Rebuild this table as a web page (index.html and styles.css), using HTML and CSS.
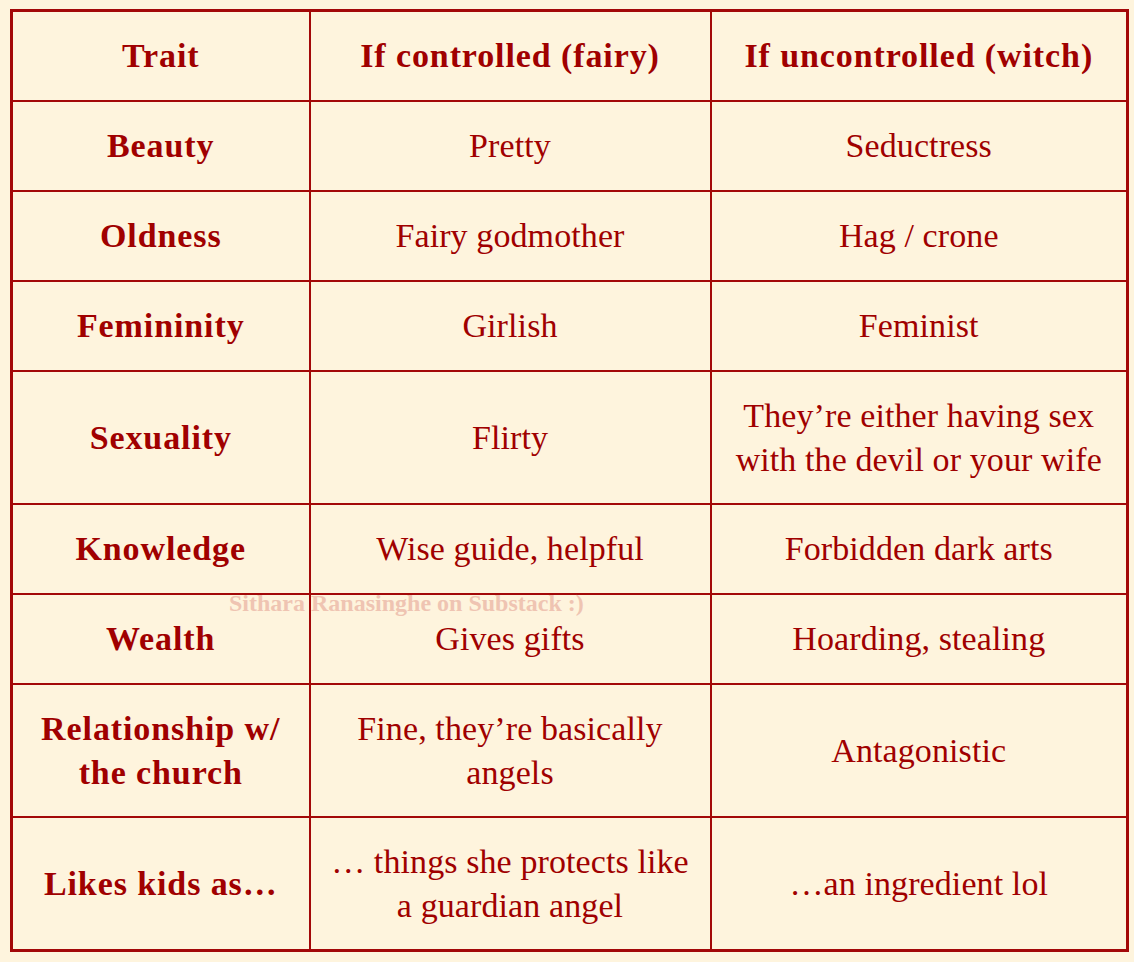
FILE: index.html
```
<!DOCTYPE html>
<html>
<head>
<meta charset="utf-8">
<link rel="stylesheet" href="styles.css">
</head>
<body>
<div class="wrap">
<table class="traits">
<colgroup><col class="c1"><col class="c2"><col class="c3"></colgroup>
<thead>
<tr><th>Trait</th><th>If controlled (fairy)</th><th>If uncontrolled (witch)</th></tr>
</thead>
<tbody>
<tr><th>Beauty</th><td>Pretty</td><td>Seductress</td></tr>
<tr><th>Oldness</th><td>Fairy godmother</td><td>Hag / crone</td></tr>
<tr><th>Femininity</th><td>Girlish</td><td>Feminist</td></tr>
<tr class="tall"><th>Sexuality</th><td>Flirty</td><td>They’re either having sex<br>with the devil or your wife</td></tr>
<tr><th>Knowledge</th><td>Wise guide, helpful</td><td>Forbidden dark arts</td></tr>
<tr><th>Wealth</th><td>Gives gifts</td><td>Hoarding, stealing</td></tr>
<tr class="tall"><th>Relationship w/<br>the church</th><td>Fine, they’re basically<br>angels</td><td>Antagonistic</td></tr>
<tr class="tall"><th>Likes kids as…</th><td>… things she protects like<br>a guardian angel</td><td>…an ingredient lol</td></tr>
</tbody>
</table>
<div class="watermark">Sithara Ranasinghe on Substack :)</div>
</div>
</body>
</html>
```
FILE: styles.css
```
html, body {
  margin: 0;
  padding: 0;
  background: #fef4dd;
}
body {
  padding: 9px 8px 10px 10px;
}
.wrap {
  position: relative;
  width: 1116px;
}
.traits {
  width: 1116px;
  border-collapse: collapse;
  table-layout: fixed;
  border: 3px solid #a30808;
  font-family: "Liberation Serif", "DejaVu Serif", serif;
  color: #a00000;
}
.c1 { width: 298px; }
.c2 { width: 401px; }
.c3 { width: 417px; }
.traits th, .traits td {
  border: 2px solid #a30808;
  text-align: center;
  vertical-align: middle;
  height: 88px;
  padding: 0 6px;
  font-size: 34px;
  line-height: 44px;
}
.traits th {
  font-weight: bold;
  letter-spacing: 0.9px;
}
.traits td {
  font-weight: normal;
  letter-spacing: 0.1px;
}
.traits tr.tall th, .traits tr.tall td {
  height: 131px;
}
.watermark {
  position: absolute;
  left: 219px;
  top: 580px;
  font-family: "Liberation Serif", serif;
  font-weight: bold;
  font-size: 24px;
  line-height: 28px;
  color: #efc4b2;
  white-space: nowrap;
}
```
